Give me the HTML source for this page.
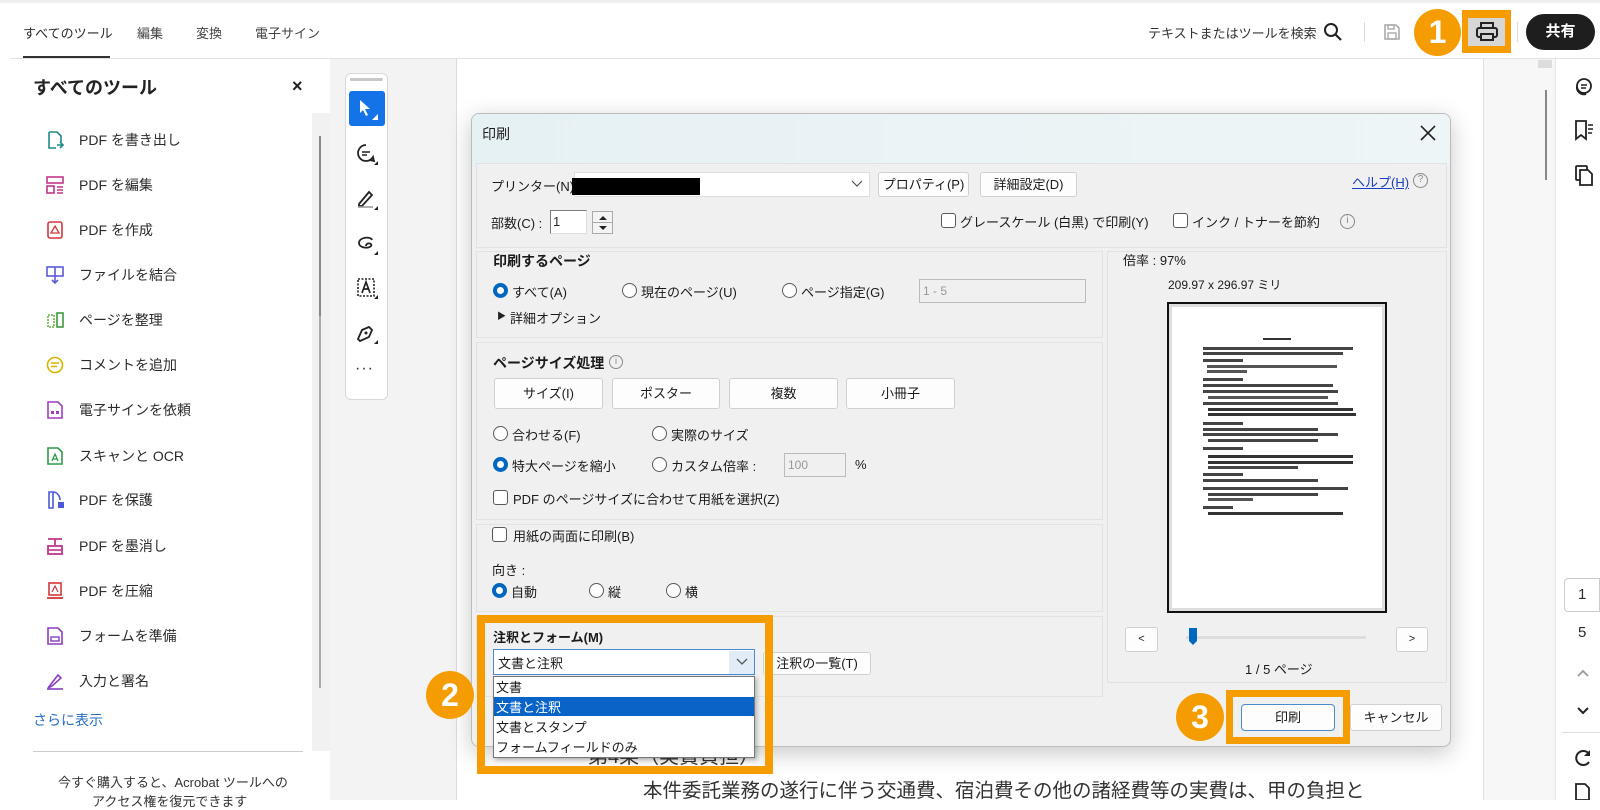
<!DOCTYPE html>
<html><head><meta charset="utf-8">
<style>
*{box-sizing:border-box;margin:0;padding:0}
body{width:1600px;height:800px;overflow:hidden;background:#fff;font-family:"Liberation Sans","Noto Sans CJK JP",sans-serif;color:#2c2c2c;position:relative}
.a{position:absolute}
.t{position:absolute;white-space:nowrap}
.dl{font-size:13px;color:#1a1a1a}
.btn{position:absolute;background:#fdfdfd;border:1px solid #d0d0d0;border-radius:3px;font-size:13px;text-align:center;color:#1a1a1a}
.rad{position:absolute;width:15px;height:15px;border:1px solid #5a5a5a;border-radius:50%;background:#fff}
.rad.on{border:4px solid #0067c0}
.cb{position:absolute;width:15px;height:15px;border:1px solid #5a5a5a;border-radius:3px;background:#fff}
.sec{position:absolute;border:1px solid #e2e2e2;background:#f0f0f0}
.item{position:absolute;left:79px;font-size:14px;color:#2c2c2c}
.ic{position:absolute;left:46px;width:18px;height:18px}
.oc{position:absolute;border-radius:50%;background:#f59c00;color:#fff;font-weight:bold;font-size:32px;text-align:center;font-family:"Liberation Sans",sans-serif}
</style></head><body>

<div class="a" style="left:0;top:0;width:1600px;height:3px;background:#eee"></div>
<div class="t" style="left:23px;top:23px;font-size:13px;color:#2c2c2c">すべてのツール</div>
<div class="t" style="left:137px;top:23px;font-size:13px;color:#444">編集</div>
<div class="t" style="left:196px;top:23px;font-size:13px;color:#444">変換</div>
<div class="t" style="left:255px;top:23px;font-size:13px;color:#444">電子サイン</div>
<div class="a" style="left:23px;top:56px;width:87px;height:2px;background:#333"></div>
<div class="a" style="left:10px;top:58px;width:1590px;height:1px;background:#e1e1e1"></div>

<div class="t" style="left:1148px;top:23px;font-size:13px;color:#333">テキストまたはツールを検索</div>
<svg class="a" style="left:1323px;top:22px" width="20" height="20" viewBox="0 0 20 20"><circle cx="8" cy="8" r="6" fill="none" stroke="#222" stroke-width="2"/><path d="M12.5 12.5L18 18" stroke="#222" stroke-width="2.2"/></svg>
<div class="a" style="left:1364px;top:22px;width:1px;height:20px;background:#ddd"></div>
<svg class="a" style="left:1383px;top:23px" width="18" height="18" viewBox="0 0 18 18"><path d="M2 2h11l3 3v11H2z" fill="none" stroke="#aaa" stroke-width="1.6"/><rect x="5" y="10" width="8" height="6" fill="none" stroke="#aaa" stroke-width="1.4"/><rect x="5" y="2" width="6" height="4" fill="none" stroke="#aaa" stroke-width="1.4"/></svg>
<div class="oc" style="left:1414px;top:9px;width:47px;height:47px;line-height:47px">1</div>
<div class="a" style="left:1462px;top:10px;width:49px;height:43px;background:#f59c00"></div>
<div class="a" style="left:1468px;top:18px;width:37px;height:28px;background:#d6d6d6"></div>
<svg class="a" style="left:1475px;top:21px" width="24" height="22" viewBox="0 0 24 22"><rect x="6" y="2" width="12" height="5" fill="none" stroke="#222" stroke-width="2"/><rect x="2" y="7" width="20" height="9" rx="2" fill="none" stroke="#222" stroke-width="2"/><rect x="6" y="13" width="12" height="6" fill="#d6d6d6" stroke="#222" stroke-width="2"/></svg>
<div class="a" style="left:1517px;top:22px;width:1px;height:20px;background:#ddd"></div>
<div class="a" style="left:1526px;top:14px;width:69px;height:36px;background:#1e1e1e;border-radius:18px;color:#fff;font-weight:bold;font-size:15px;text-align:center;line-height:36px">共有</div>

<div class="t" style="left:33px;top:74px;font-size:18px;font-weight:bold;color:#222">すべてのツール</div>
<div class="t" style="left:292px;top:76px;font-size:18px;font-weight:bold;color:#222">×</div>
<div class="a" style="left:312px;top:113px;width:18px;height:638px;background:#f1f1f1"></div>
<div class="a" style="left:319px;top:136px;width:2px;height:180px;background:#888"></div>
<div class="a" style="left:319px;top:316px;width:2px;height:372px;background:#aaa"></div>

<svg class="ic" style="top:131px" viewBox="0 0 18 18"><path d="M3 1h8l4 4v6M3 1v16h7" fill="none" stroke="#1d8a86" stroke-width="1.6"/><path d="M11 14h6M14 11l3 3-3 3" fill="none" stroke="#1d8a86" stroke-width="1.6"/></svg>
<div class="item" style="top:130px">PDF を書き出し</div>
<svg class="ic" style="top:176px" viewBox="0 0 18 18"><rect x="1" y="1" width="16" height="6" fill="none" stroke="#c2368a" stroke-width="1.6"/><rect x="1" y="10" width="7" height="7" fill="none" stroke="#c2368a" stroke-width="1.6"/><path d="M11 11h6M11 14h6M11 17h6" stroke="#c2368a" stroke-width="1.6"/></svg>
<div class="item" style="top:175px">PDF を編集</div>
<svg class="ic" style="top:221px" viewBox="0 0 18 18"><rect x="2" y="1" width="14" height="16" rx="2" fill="none" stroke="#d3373a" stroke-width="1.6"/><path d="M5 12l4-7 4 7z" fill="none" stroke="#d3373a" stroke-width="1.3"/></svg>
<div class="item" style="top:220px">PDF を作成</div>
<svg class="ic" style="top:266px" viewBox="0 0 18 18"><rect x="1" y="1" width="16" height="9" fill="none" stroke="#5b5bd6" stroke-width="1.6"/><path d="M9 1v16M6 14l3 3 3-3" fill="none" stroke="#5b5bd6" stroke-width="1.6"/></svg>
<div class="item" style="top:265px">ファイルを結合</div>
<svg class="ic" style="top:311px" viewBox="0 0 18 18"><rect x="2" y="4" width="6" height="12" fill="none" stroke="#6eb64a" stroke-width="1.6" stroke-dasharray="2 1"/><rect x="11" y="2" width="6" height="14" fill="none" stroke="#3d9a3d" stroke-width="1.6"/></svg>
<div class="item" style="top:310px">ページを整理</div>
<svg class="ic" style="top:356px" viewBox="0 0 18 18"><circle cx="9" cy="9" r="7.5" fill="none" stroke="#d9b300" stroke-width="1.6"/><path d="M5 7h8M5 10.5h6" stroke="#d9b300" stroke-width="1.6"/></svg>
<div class="item" style="top:355px">コメントを追加</div>
<svg class="ic" style="top:401px" viewBox="0 0 18 18"><path d="M2 1h10l4 4v12H2z" fill="none" stroke="#a13ec2" stroke-width="1.6"/><rect x="5" y="10" width="3" height="3" fill="#a13ec2"/><rect x="10" y="10" width="3" height="3" fill="#a13ec2"/></svg>
<div class="item" style="top:400px">電子サインを依頼</div>
<svg class="ic" style="top:447px" viewBox="0 0 18 18"><path d="M2 1h10l4 4v12H2z" fill="none" stroke="#2f9a4a" stroke-width="1.6"/><path d="M6 14l3-7 3 7M7 12h4" fill="none" stroke="#2f9a4a" stroke-width="1.3"/></svg>
<div class="item" style="top:446px">スキャンと OCR</div>
<svg class="ic" style="top:491px" viewBox="0 0 18 18"><path d="M7 1h-4v16h4zM7 1a7 8 0 0 1 7 8" fill="none" stroke="#4b5bd6" stroke-width="1.6"/><rect x="12" y="11" width="6" height="6" fill="#4b5bd6"/></svg>
<div class="item" style="top:490px">PDF を保護</div>
<svg class="ic" style="top:537px" viewBox="0 0 18 18"><path d="M2 2h14M9 2v6" stroke="#c2368a" stroke-width="1.8"/><rect x="2" y="9" width="14" height="8" fill="none" stroke="#c2368a" stroke-width="1.8"/><path d="M2 13h14" stroke="#c2368a" stroke-width="1.6"/></svg>
<div class="item" style="top:536px">PDF を墨消し</div>
<svg class="ic" style="top:582px" viewBox="0 0 18 18"><rect x="3" y="1" width="12" height="12" fill="none" stroke="#d3373a" stroke-width="1.6"/><path d="M1 16h16" stroke="#d3373a" stroke-width="1.8"/><path d="M6 10l3-6 3 6" fill="none" stroke="#d3373a" stroke-width="1.2"/></svg>
<div class="item" style="top:581px">PDF を圧縮</div>
<svg class="ic" style="top:627px" viewBox="0 0 18 18"><path d="M2 1h10l4 4v12H2z" fill="none" stroke="#8a3ec2" stroke-width="1.6"/><rect x="5" y="10" width="8" height="4" fill="none" stroke="#8a3ec2" stroke-width="1.4"/></svg>
<div class="item" style="top:626px">フォームを準備</div>
<svg class="ic" style="top:672px" viewBox="0 0 18 18"><path d="M2 16L12 3l3 3-9 8z" fill="none" stroke="#8a3ec2" stroke-width="1.6"/><path d="M1 17h16" stroke="#8a3ec2" stroke-width="1.6"/></svg>
<div class="item" style="top:671px">入力と署名</div>
<div class="t" style="left:33px;top:710px;font-size:14px;color:#2a6fc0">さらに表示</div>
<div class="a" style="left:33px;top:751px;width:270px;height:1px;background:#ccc"></div>
<div class="t" style="left:58px;top:772px;font-size:13px;color:#333">今すぐ購入すると、Acrobat ツールへの</div>
<div class="t" style="left:92px;top:791px;font-size:13px;color:#333">アクセス権を復元できます</div>

<div class="a" style="left:330px;top:59px;width:127px;height:741px;background:#f3f3f3"></div>
<div class="a" style="left:456px;top:59px;width:1px;height:741px;background:#dcdcdc"></div>
<div class="a" style="left:345px;top:73px;width:43px;height:327px;background:#fff;border:1px solid #d8d8d8;border-radius:6px"></div>
<div class="a" style="left:350px;top:78px;width:33px;height:3px;background:#c8c8c8;border-radius:2px"></div>
<div class="a" style="left:349px;top:91px;width:36px;height:35px;background:#1473e6;border-radius:3px"></div>
<svg class="a" style="left:355px;top:97px" width="24" height="24" viewBox="0 0 24 24"><path d="M5 3v13l3-3 3 6 2-1-3-6h5z" fill="#fff"/><path d="M23 17v6h-6z" fill="#fff"/></svg>
<svg class="a" style="left:355px;top:142px" width="24" height="24" viewBox="0 0 24 24"><path d="M11 3a8 8 0 1 0 7 12l1 4-4-1" fill="none" stroke="#222" stroke-width="1.8"/><path d="M7 10h8M7 13h5" stroke="#222" stroke-width="1.6"/><path d="M23 19v4h-4z" fill="#222"/></svg>
<svg class="a" style="left:355px;top:187px" width="24" height="24" viewBox="0 0 24 24"><path d="M4 17l10-12 3 3-10 11H4z" fill="none" stroke="#222" stroke-width="1.8"/><path d="M3 20h15" stroke="#999" stroke-width="1.6"/><path d="M23 19v4h-4z" fill="#222"/></svg>
<svg class="a" style="left:355px;top:232px" width="24" height="24" viewBox="0 0 24 24"><path d="M17 8c-1-4-13-3-13 3 0 5 10 6 12 3s-5-4-5 0" fill="none" stroke="#222" stroke-width="1.8"/><path d="M23 19v4h-4z" fill="#222"/></svg>
<svg class="a" style="left:355px;top:276px" width="24" height="24" viewBox="0 0 24 24"><rect x="3" y="3" width="16" height="17" fill="none" stroke="#222" stroke-width="1.6" stroke-dasharray="2 1.5"/><path d="M7 17l4-11 4 11M8.5 13h5" fill="none" stroke="#222" stroke-width="1.7"/><path d="M23 19v4h-4z" fill="#222"/></svg>
<svg class="a" style="left:355px;top:321px" width="24" height="24" viewBox="0 0 24 24"><path d="M3 18l4-9 7-3 3 3-3 7-9 4z" fill="none" stroke="#222" stroke-width="1.8"/><circle cx="11" cy="12" r="1.5" fill="#222"/><path d="M23 19v4h-4z" fill="#222"/></svg>
<div class="t" style="left:355px;top:360px;font-size:16px;color:#333;letter-spacing:1px">···</div>

<div class="t" style="left:588px;top:740px;font-size:20px;color:#333">第4条（実費負担）</div>
<div class="t" style="left:643px;top:774px;font-size:19.5px;color:#333">本件委託業務の遂行に伴う交通費、宿泊費その他の諸経費等の実費は、甲の負担と</div>

<div class="a" style="left:1483px;top:59px;width:1px;height:741px;background:#e0e0e0"></div>
<div class="a" style="left:1484px;top:59px;width:71px;height:741px;background:#f7f7f7"></div>
<div class="a" style="left:1538px;top:60px;width:14px;height:8px;background:#ddd"></div>
<div class="a" style="left:1545px;top:90px;width:2px;height:90px;background:#888"></div>
<div class="a" style="left:1555px;top:59px;width:1px;height:741px;background:#e6e6e6"></div>
<svg class="a" style="left:1572px;top:77px" width="22" height="22" viewBox="0 0 22 22"><circle cx="12" cy="9" r="7" fill="none" stroke="#222" stroke-width="1.8"/><path d="M9 8h6M9 11h5" stroke="#222" stroke-width="1.5"/><path d="M5 9a7 7 0 0 0 9 8" fill="none" stroke="#222" stroke-width="1.8"/></svg>
<svg class="a" style="left:1573px;top:119px" width="22" height="22" viewBox="0 0 22 22"><path d="M3 2h10v18l-5-4-5 4z" fill="none" stroke="#222" stroke-width="1.8"/><path d="M15 6h5M15 10h5M15 14h4" stroke="#222" stroke-width="1.4"/></svg>
<svg class="a" style="left:1573px;top:164px" width="22" height="22" viewBox="0 0 22 22"><rect x="3" y="2" width="11" height="14" rx="1" fill="none" stroke="#222" stroke-width="1.8"/><path d="M7 6h8l4 4v11H7z" fill="#fff" stroke="#222" stroke-width="1.8"/></svg>
<div class="a" style="left:1564px;top:578px;width:36px;height:34px;border:1px solid #ccc;border-radius:4px 0 0 4px;font-size:15px;line-height:32px;padding-left:13px">1</div>
<div class="t" style="left:1578px;top:624px;font-size:15px">5</div>
<svg class="a" style="left:1576px;top:668px" width="14" height="10" viewBox="0 0 14 10"><path d="M2 8l5-5 5 5" fill="none" stroke="#999" stroke-width="1.8"/></svg>
<svg class="a" style="left:1576px;top:706px" width="14" height="10" viewBox="0 0 14 10"><path d="M2 2l5 5 5-5" fill="none" stroke="#222" stroke-width="2"/></svg>
<div class="a" style="left:1562px;top:732px;width:38px;height:1px;background:#ddd"></div>
<svg class="a" style="left:1573px;top:748px" width="20" height="20" viewBox="0 0 20 20"><path d="M16 6A7 7 0 1 0 16 14" fill="none" stroke="#222" stroke-width="2"/><path d="M17 2v6h-6z" fill="#222"/></svg>
<svg class="a" style="left:1574px;top:783px" width="18" height="17" viewBox="0 0 18 17"><path d="M2 1h9l4 4v12H2z" fill="none" stroke="#222" stroke-width="1.8"/></svg>

<div class="a" style="left:471px;top:113px;width:980px;height:634px;background:#f0f0f0;border:1px solid #bcbcbc;border-radius:8px;box-shadow:0 6px 24px rgba(0,0,0,.22);overflow:hidden">
  <div class="a" style="left:0;top:0;width:980px;height:52px;background:linear-gradient(90deg,#e6f1f4,#eef5f6)"></div>
</div>
<div class="t" style="left:482px;top:124px;font-size:14px;color:#1a1a1a">印刷</div>
<svg class="a" style="left:1419px;top:124px" width="18" height="18" viewBox="0 0 18 18"><path d="M2 2l14 14M16 2L2 16" stroke="#222" stroke-width="1.6"/></svg>

<div class="sec" style="left:476px;top:163px;width:971px;height:85px"></div>
<div class="t dl" style="left:491px;top:176px">プリンター(N) :</div>
<div class="a" style="left:574px;top:172px;width:296px;height:25px;background:#fff;border:1px solid #ddd"></div>
<div class="a" style="left:572px;top:178px;width:128px;height:17px;background:#000"></div>
<svg class="a" style="left:851px;top:180px" width="12" height="8" viewBox="0 0 12 8"><path d="M1 1l5 5 5-5" fill="none" stroke="#555" stroke-width="1.2"/></svg>
<div class="btn" style="left:878px;top:172px;width:91px;height:25px;line-height:23px">プロパティ(P)</div>
<div class="btn" style="left:980px;top:172px;width:97px;height:25px;line-height:23px">詳細設定(D)</div>
<div class="t" style="left:1352px;top:172px;font-size:13px;color:#1a3fc0;text-decoration:underline">ヘルプ(H)</div>
<div class="a" style="left:1413px;top:173px;width:15px;height:15px;border:1.5px solid #888;border-radius:50%;font-size:10px;line-height:12px;text-align:center;color:#888">?</div>
<div class="t dl" style="left:491px;top:213px">部数(C) :</div>
<div class="a" style="left:550px;top:210px;width:37px;height:24px;background:#fff;border:1px solid #7a7a7a;border-right-color:#ddd;border-bottom-color:#ddd;font-size:13px;padding-left:2px;line-height:21px">1</div>
<div class="a" style="left:592px;top:211px;width:21px;height:23px;border:1px solid #aaa;background:#f4f4f4"></div>
<div class="a" style="left:592px;top:222px;width:21px;height:1px;background:#aaa"></div>
<svg class="a" style="left:597px;top:213px" width="12" height="20" viewBox="0 0 12 20"><path d="M2 7l4-4 4 4z" fill="#222"/><path d="M2 13l4 4 4-4z" fill="#222"/></svg>
<div class="cb" style="left:941px;top:213px"></div>
<div class="t dl" style="left:960px;top:212px">グレースケール (白黒) で印刷(Y)</div>
<div class="cb" style="left:1173px;top:213px"></div>
<div class="t dl" style="left:1192px;top:212px">インク / トナーを節約</div>
<div class="a" style="left:1340px;top:214px;width:15px;height:15px;border:1.5px solid #888;border-radius:50%;font-size:10px;line-height:12px;text-align:center;color:#888">i</div>

<div class="sec" style="left:476px;top:251px;width:627px;height:87px"></div>
<div class="t" style="left:493px;top:251px;font-size:14px;font-weight:bold;color:#1a1a1a">印刷するページ</div>
<div class="rad on" style="left:493px;top:283px"></div><div class="t dl" style="left:512px;top:282px">すべて(A)</div>
<div class="rad" style="left:622px;top:283px"></div><div class="t dl" style="left:641px;top:282px">現在のページ(U)</div>
<div class="rad" style="left:782px;top:283px"></div><div class="t dl" style="left:801px;top:282px">ページ指定(G)</div>
<div class="a" style="left:919px;top:279px;width:167px;height:24px;background:#f0f0f0;border:1px solid #bbb;font-size:12px;color:#999;padding-left:3px;line-height:22px">1 - 5</div>
<div class="t" style="left:497px;top:309px;font-size:9px;color:#222">▶</div>
<div class="t dl" style="left:510px;top:308px">詳細オプション</div>

<div class="sec" style="left:476px;top:342px;width:627px;height:178px"></div>
<div class="t" style="left:493px;top:353px;font-size:14px;font-weight:bold;color:#1a1a1a">ページサイズ処理</div>
<div class="a" style="left:609px;top:355px;width:14px;height:14px;border:1.3px solid #888;border-radius:50%;font-size:9px;line-height:11px;text-align:center;color:#888">i</div>
<div class="btn" style="left:494px;top:378px;width:109px;height:31px;line-height:29px">サイズ(I)</div>
<div class="btn" style="left:612px;top:378px;width:108px;height:31px;line-height:29px">ポスター</div>
<div class="btn" style="left:729px;top:378px;width:109px;height:31px;line-height:29px">複数</div>
<div class="btn" style="left:846px;top:378px;width:109px;height:31px;line-height:29px">小冊子</div>
<div class="rad" style="left:493px;top:426px"></div><div class="t dl" style="left:512px;top:425px">合わせる(F)</div>
<div class="rad" style="left:652px;top:426px"></div><div class="t dl" style="left:671px;top:425px">実際のサイズ</div>
<div class="rad on" style="left:493px;top:457px"></div><div class="t dl" style="left:512px;top:456px">特大ページを縮小</div>
<div class="rad" style="left:652px;top:457px"></div><div class="t dl" style="left:671px;top:456px">カスタム倍率 :</div>
<div class="a" style="left:784px;top:453px;width:62px;height:24px;background:#f0f0f0;border:1px solid #bbb;font-size:12px;color:#999;padding-left:3px;line-height:22px">100</div>
<div class="t dl" style="left:855px;top:457px">%</div>
<div class="cb" style="left:493px;top:490px"></div>
<div class="t dl" style="left:513px;top:489px">PDF のページサイズに合わせて用紙を選択(Z)</div>

<div class="sec" style="left:476px;top:524px;width:627px;height:88px"></div>
<div class="cb" style="left:492px;top:527px"></div>
<div class="t dl" style="left:513px;top:526px">用紙の両面に印刷(B)</div>
<div class="t dl" style="left:492px;top:560px">向き :</div>
<div class="rad on" style="left:492px;top:583px"></div><div class="t dl" style="left:511px;top:582px">自動</div>
<div class="rad" style="left:589px;top:583px"></div><div class="t dl" style="left:608px;top:582px">縦</div>
<div class="rad" style="left:666px;top:583px"></div><div class="t dl" style="left:685px;top:582px">横</div>

<div class="sec" style="left:476px;top:616px;width:627px;height:81px"></div>
<div class="t" style="left:493px;top:627px;font-size:13px;font-weight:bold;color:#1a1a1a">注釈とフォーム(M)</div>
<div class="a" style="left:493px;top:649px;width:262px;height:26px;background:#fff;border:1px solid #4a8ad0"></div>
<div class="a" style="left:729px;top:651px;width:25px;height:23px;background:#e1ecf8"></div>
<div class="t dl" style="left:498px;top:653px">文書と注釈</div>
<svg class="a" style="left:736px;top:658px" width="12" height="8" viewBox="0 0 12 8"><path d="M1 1l5 5 5-5" fill="none" stroke="#555" stroke-width="1.3"/></svg>
<div class="btn" style="left:763px;top:652px;width:108px;height:23px;line-height:21px">注釈の一覧(T)</div>

<div class="sec" style="left:1107px;top:251px;width:340px;height:432px"></div>
<div class="t dl" style="left:1123px;top:250px">倍率 : 97%</div>
<div class="t" style="left:1168px;top:276px;font-size:12px;color:#1a1a1a">209.97 x 296.97 ミリ</div>
<div class="a" style="left:1167px;top:302px;width:220px;height:311px;border:2px solid #111;background:#fff;box-shadow:inset 0 0 0 4px #ddd"></div>
<div class="a" style="left:1172px;top:307px;width:210px;height:301px;background:#fff"></div>
<div class="a" style="left:1203px;top:338px;width:150px;height:0">
  <div class="a" style="left:60px;top:0;width:28px;height:2px;background:#333"></div>
  <div class="a" style="left:0;top:9px;width:150px;height:3px;background:#444"></div>
  <div class="a" style="left:0;top:14px;width:140px;height:3px;background:#444"></div>
  <div class="a" style="left:0;top:21px;width:40px;height:3px;background:#444"></div>
  <div class="a" style="left:4px;top:27px;width:130px;height:3px;background:#555"></div>
  <div class="a" style="left:4px;top:32px;width:40px;height:3px;background:#555"></div>
  <div class="a" style="left:0;top:40px;width:40px;height:3px;background:#444"></div>
  <div class="a" style="left:0;top:46px;width:130px;height:3px;background:#444"></div>
  <div class="a" style="left:0;top:52px;width:135px;height:3px;background:#444"></div>
  <div class="a" style="left:5px;top:58px;width:120px;height:3px;background:#555"></div>
  <div class="a" style="left:0;top:64px;width:135px;height:3px;background:#444"></div>
  <div class="a" style="left:5px;top:70px;width:145px;height:3px;background:#333"></div>
  <div class="a" style="left:5px;top:75px;width:148px;height:3px;background:#333"></div>
  <div class="a" style="left:0;top:84px;width:40px;height:3px;background:#444"></div>
  <div class="a" style="left:0;top:90px;width:115px;height:3px;background:#444"></div>
  <div class="a" style="left:0;top:95px;width:135px;height:3px;background:#444"></div>
  <div class="a" style="left:5px;top:101px;width:110px;height:3px;background:#444"></div>
  <div class="a" style="left:0;top:109px;width:40px;height:3px;background:#444"></div>
  <div class="a" style="left:5px;top:117px;width:145px;height:3px;background:#333"></div>
  <div class="a" style="left:5px;top:123px;width:145px;height:3px;background:#333"></div>
  <div class="a" style="left:5px;top:128px;width:90px;height:3px;background:#444"></div>
  <div class="a" style="left:0;top:135px;width:40px;height:3px;background:#444"></div>
  <div class="a" style="left:0;top:141px;width:115px;height:3px;background:#444"></div>
  <div class="a" style="left:0;top:149px;width:145px;height:3px;background:#444"></div>
  <div class="a" style="left:5px;top:155px;width:110px;height:3px;background:#444"></div>
  <div class="a" style="left:5px;top:160px;width:45px;height:3px;background:#555"></div>
  <div class="a" style="left:0;top:168px;width:30px;height:3px;background:#444"></div>
  <div class="a" style="left:5px;top:174px;width:135px;height:3px;background:#333"></div>
</div>
<div class="btn" style="left:1125px;top:627px;width:33px;height:25px;line-height:23px;font-size:11px">&lt;</div>
<div class="btn" style="left:1396px;top:627px;width:32px;height:25px;line-height:23px;font-size:11px">&gt;</div>
<div class="a" style="left:1186px;top:636px;width:180px;height:3px;background:#ddd"></div>
<svg class="a" style="left:1188px;top:628px" width="10" height="18" viewBox="0 0 10 18"><path d="M1 0h8v13l-4 4-4-4z" fill="#0067c0"/></svg>
<div class="t dl" style="left:1245px;top:659px">1 / 5 ページ</div>

<div class="btn" style="left:1241px;top:704px;width:94px;height:27px;line-height:25px;border:1.5px solid #4a8ad0;border-radius:4px">印刷</div>
<div class="btn" style="left:1350px;top:704px;width:92px;height:27px;line-height:25px">キャンセル</div>

<div class="a" style="left:493px;top:676px;width:262px;height:82px;background:#fff;border:1px solid #777;box-shadow:2px 2px 4px rgba(0,0,0,.25)"></div>
<div class="t dl" style="left:496px;top:677px">文書</div>
<div class="a" style="left:494px;top:697px;width:260px;height:19px;background:#0a64c8"></div>
<div class="t dl" style="left:496px;top:697px;color:#fff">文書と注釈</div>
<div class="t dl" style="left:496px;top:717px">文書とスタンプ</div>
<div class="t dl" style="left:496px;top:737px">フォームフィールドのみ</div>

<div class="a" style="left:477px;top:615px;width:296px;height:159px;border:8px solid #f59c00"></div>
<div class="oc" style="left:426px;top:671px;width:48px;height:48px;line-height:48px">2</div>
<div class="a" style="left:1226px;top:690px;width:124px;height:54px;border:7px solid #f59c00"></div>
<div class="oc" style="left:1176px;top:693px;width:48px;height:48px;line-height:48px">3</div>

</body></html>
